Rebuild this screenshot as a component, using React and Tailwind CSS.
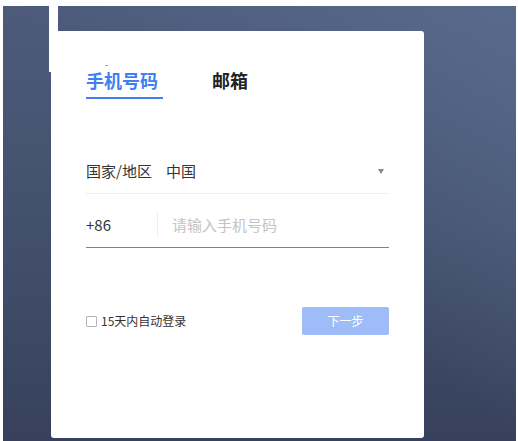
export default function App() {
  return (
    <div
      className="w-[518px] h-[441px] bg-white pt-[6px] pl-[3px] pr-[2px] overflow-hidden"
      style={{ fontFamily: '"Noto Sans CJK SC", "Noto Sans", sans-serif' }}
    >
      <div className="relative h-[435px] bg-gradient-to-b from-[#4d5a7a] via-[#43506d] to-[#37415c] flex flex-col">
        <div className="absolute inset-0 bg-gradient-to-bl from-[#5d7193]/70 via-transparent to-transparent pointer-events-none" />
        <div className="absolute left-[46px] top-0 w-[9px] h-[66px] bg-white" />
        <div className="relative ml-[48px] mt-[25px] w-[373px] h-[407px] bg-white rounded-[3px] pl-[35px] pr-[35px] pt-[38px]">
          <div className="w-[3px] ml-[19px] -mt-[4px] mb-[2px] h-[1px] bg-[#9aa59a]" />
          <div className="flex items-end gap-[49px]">
            <div className="flex flex-col">
              <span className="text-[18px] leading-[24px] font-bold text-[#3f7ff0]">手机号码</span>
              <div className="mt-[5px] h-[2px] w-[77px] bg-[#3f7ff0]" />
            </div>
            <span className="text-[18px] leading-[24px] font-bold text-[#222] mb-[7px]">邮箱</span>
          </div>

          <div className="mt-[50px] w-[303px] h-[45px] border-b border-[#eeeeee] flex items-center text-[15px] text-[#333]">
            <span>国家/地区</span>
            <span className="ml-[14px]">中国</span>
            <span className="ml-auto mr-[5px] w-0 h-0 border-l-[3px] border-r-[3px] border-t-[5px] border-l-transparent border-r-transparent border-t-[#888]" />
          </div>

          <div className="mt-[9px] w-[303px] flex flex-col">
            <div className="h-[44px] flex items-center text-[15px]">
              <span className="w-[71px] text-[#333]">+86</span>
              <span className="w-px h-[26px] bg-[#eeeeee]" />
              <span className="ml-[14px] text-[#c4c4c4]">请输入手机号码</span>
            </div>
            <div className="h-px bg-[#4f86ec]" />
          </div>

          <div className="mt-[59px] w-[303px] flex items-center">
            <span className="w-[11px] h-[11px] border border-[#b5b5b5] rounded-[1px]" />
            <span className="ml-[4px] text-[12px] text-[#333]">15天内自动登录</span>
            <div className="ml-auto w-[87px] h-[28px] rounded-[2px] bg-[#9ebdf8] flex items-center justify-center text-[12px] text-white">
              下一步
            </div>
          </div>
        </div>
      </div>
    </div>
  );
}
